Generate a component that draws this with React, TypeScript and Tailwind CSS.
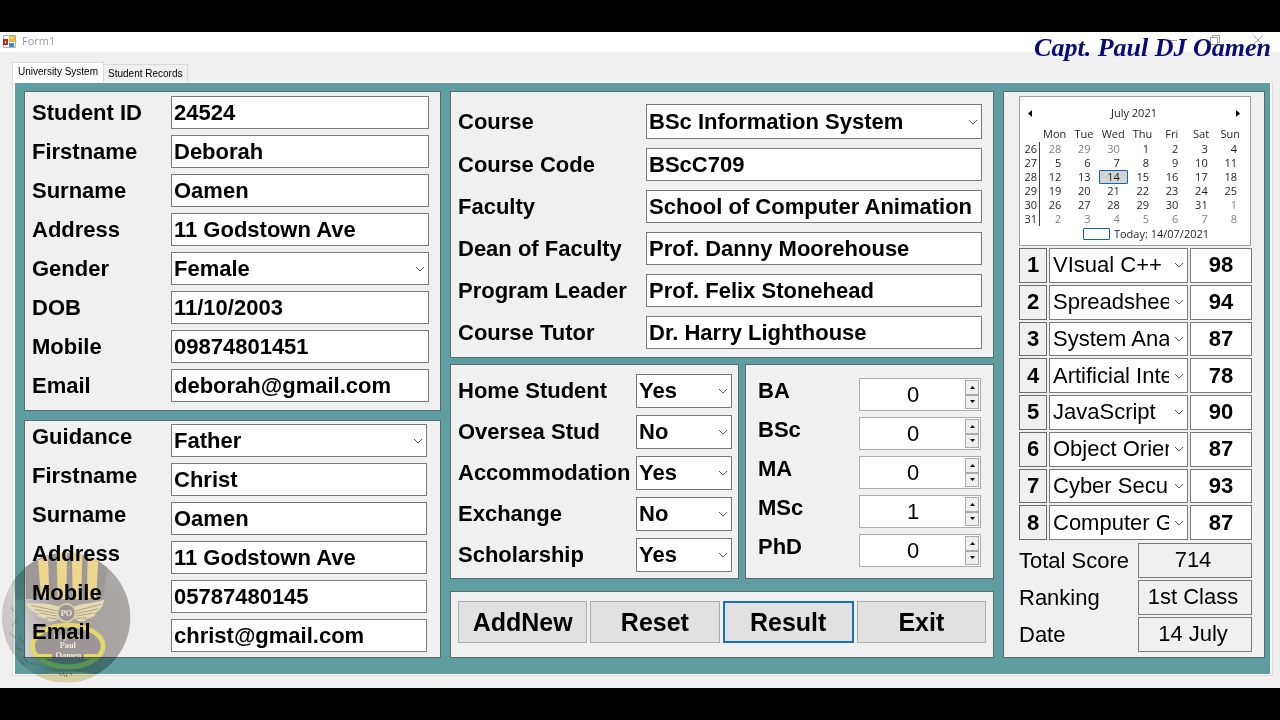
import React, { useId } from "react";

const panel = "border border-[#5c6b6c] bg-[#f0f0f0]";
const fieldBox =
  "block w-full min-w-0 rounded-none border border-[#7a7a7a] bg-white text-[22px] leading-7 font-bold text-black outline-none";

function Chevron() {
  return (
    <svg
      className="pointer-events-none absolute top-1/2 right-1 h-2 w-[10px] -translate-y-1/2"
      viewBox="0 0 10 8"
      fill="none"
      stroke="#5a5a5a"
      aria-hidden="true"
    >
      <path d="M1 2 L5 6 L9 2" />
    </svg>
  );
}

type FieldProps = {
  label: string;
  value: string;
  select?: boolean;
  columns: string;
  height?: string;
  labelClass?: string;
};

function Field({ label, value, select, columns, height = "h-[33px]", labelClass = "" }: FieldProps) {
  const id = useId();
  return (
    <div className={`grid items-center ${columns}`}>
      <label htmlFor={id} className={`text-[22px] leading-6 font-bold whitespace-nowrap ${labelClass}`}>
        {label}
      </label>
      {select ? (
        <div className="relative">
          <select id={id} defaultValue={value} className={`${fieldBox} ${height} appearance-none pr-4 pl-[2px]`}>
            <option>{value}</option>
          </select>
          <Chevron />
        </div>
      ) : (
        <input id={id} type="text" defaultValue={value} className={`${fieldBox} ${height} px-[2px]`} />
      )}
    </div>
  );
}

function Counter({ label, value }: { label: string; value: number }) {
  const id = useId();
  return (
    <div className="grid grid-cols-[1fr_122px] items-center">
      <label htmlFor={id} className="pb-2 text-[22px] leading-6 font-bold">
        {label}
      </label>
      <div className="flex h-[33px] border border-[#adadad] bg-white p-px">
        <input
          id={id}
          type="number"
          defaultValue={value}
          className="w-full min-w-0 flex-1 bg-white text-center text-[22px] leading-7 text-black outline-none [appearance:textfield] [&::-webkit-inner-spin-button]:appearance-none"
        />
        <div className="flex w-[14px] flex-col">
          <button type="button" aria-label={`${label} up`} className="flex flex-1 items-center justify-center border border-[#acacac] bg-[#efefef]">
            <svg viewBox="0 0 5 3" className="h-[3px] w-[5px]">
              <path d="M0 3 L2.5 0 L5 3Z" />
            </svg>
          </button>
          <button type="button" aria-label={`${label} down`} className="flex flex-1 items-center justify-center border border-[#acacac] bg-[#efefef]">
            <svg viewBox="0 0 5 3" className="h-[3px] w-[5px]">
              <path d="M0 0 L2.5 3 L5 0Z" />
            </svg>
          </button>
        </div>
      </div>
    </div>
  );
}

const days = ["Mon", "Tue", "Wed", "Thu", "Fri", "Sat", "Sun"];
const weeks = [
  { week: 26, dates: [28, 29, 30, 1, 2, 3, 4] },
  { week: 27, dates: [5, 6, 7, 8, 9, 10, 11] },
  { week: 28, dates: [12, 13, 14, 15, 16, 17, 18] },
  { week: 29, dates: [19, 20, 21, 22, 23, 24, 25] },
  { week: 30, dates: [26, 27, 28, 29, 30, 31, 1] },
  { week: 31, dates: [2, 3, 4, 5, 6, 7, 8] },
];

function Calendar() {
  return (
    <div className="mr-[13px] ml-[15px] flex h-[150px] flex-col border border-[#a0a0a0] bg-white pt-2 pr-[5px] pl-[3px] font-['Open_Sans','Noto_Sans',sans-serif] text-[11px] text-[#1e1e1e]">
      <div className="flex h-4 items-center justify-between px-[5px]">
        <button type="button" aria-label="Previous month">
          <svg viewBox="0 0 4 7" className="h-[7px] w-1">
            <path d="M4 0 L0 3.5 L4 7Z" />
          </svg>
        </button>
        <span>July 2021</span>
        <button type="button" aria-label="Next month">
          <svg viewBox="0 0 4 7" className="h-[7px] w-1">
            <path d="M0 0 L4 3.5 L0 7Z" />
          </svg>
        </button>
      </div>
      <table className="mt-[5px] w-full table-fixed border-separate border-spacing-0 leading-[14px]">
        <thead>
          <tr className="h-4">
            <th className="w-[17px] p-0" />
            {days.map((d) => (
              <th key={d} className="p-0 text-center font-normal">
                {d}
              </th>
            ))}
          </tr>
        </thead>
        <tbody>
          {weeks.map(({ week, dates }, r) => (
            <tr key={week} className="h-[14px]">
              <td className="border-r border-[#404040] p-0 pr-[2px] text-right">{week}</td>
              {dates.map((date, c) => {
                const outside = (r === 0 && date > 7) || (r >= 4 && date < 20);
                const selected = r === 2 && date === 14;
                return (
                  <td key={c} className={`p-0 text-right ${outside ? "text-[#808080]" : ""}`}>
                    <span
                      className={`block pr-2 ${
                        selected ? "rounded-[1px] bg-[#d4d4d4] outline outline-offset-[-1px] outline-[#1464b4]" : ""
                      }`}
                    >
                      {date}
                    </span>
                  </td>
                );
              })}
            </tr>
          ))}
        </tbody>
      </table>
      <div className="flex items-center justify-center gap-1 pl-6 leading-4">
        <span className="h-3 w-[27px] rounded-[1px] border border-[#1464b4]" />
        <span>Today: 14/07/2021</span>
      </div>
    </div>
  );
}

const modules = [
  ["VIsual C++", 98],
  ["Spreadsheet", 94],
  ["System Analysis", 87],
  ["Artificial Intelligence", 78],
  ["JavaScript", 90],
  ["Object Oriented", 87],
  ["Cyber Security", 93],
  ["Computer Graphics", 87],
] as const;

const totals = [
  ["Total Score", "714"],
  ["Ranking", "1st Class"],
  ["Date", "14 July"],
];

function Watermark() {
  return (
    <svg
      viewBox="8 98 388 392"
      className="pointer-events-none absolute bottom-[5px] left-[2px] h-[131px] w-[129px] mix-blend-multiply"
      aria-hidden="true"
    >
      <defs>
        <clipPath id="disc">
          <ellipse cx="201" cy="294" rx="193" ry="195" />
        </clipPath>
        <linearGradient id="shade" x1="0" x2="1" y1="0.6" y2="0.4">
          <stop offset="0" stopColor="#d2d2d2" />
          <stop offset="0.16" stopColor="#dedede" />
          <stop offset="0.34" stopColor="#bab8b6" />
          <stop offset="0.5" stopColor="#aeaaa8" />
          <stop offset="1" stopColor="#b8b4b2" />
        </linearGradient>
      </defs>
      <g clipPath="url(#disc)">
        <rect x="8" y="98" width="388" height="392" fill="url(#shade)" />
        <path d="M78 98 H330 L312 238 H80Z" fill="#a8a3a1" />
        <path d="M40 180 L76 150 V236 L50 244Z" fill="#b8b8b8" opacity="0.7" />
        <path
          d="M34 262 l10 14 M52 300 l-14 20 M30 340 l20 16 M60 350 l12 22 M48 384 l22 10 M70 410 l16 20 M92 430 l20 6 M60 420 l18 22"
          stroke="#a4a8a8"
          strokeWidth="5"
          opacity="0.55"
        />
        <g fill="#fbe596">
          <path d="M116 122 L146 108 L151 236 H126Z" />
          <path d="M172 100 H204 L201 238 H176Z" />
          <path d="M218 100 H250 L246 238 H221Z" />
          <path d="M266 106 L298 118 L291 236 H263Z" />
        </g>
        <path
          d="M80 252 C120 250 155 252 180 262 L176 300 C165 306 155 307 143 304 L148 298 C130 298 120 293 112 287 L120 285 C103 280 92 270 86 262 Z"
          fill="#f3e8c0"
        />
        <path
          d="M316 240 C290 252 250 250 224 262 L228 300 C240 306 250 307 261 304 L256 298 C273 298 284 291 291 285 L284 283 C300 276 311 264 316 240Z"
          fill="#f3e8c0"
        />
        <path
          d="M96 258 L174 274 M106 270 L174 282 M120 280 L174 290 M142 294 L174 298 M308 254 L230 274 M298 268 L230 282 M284 280 L230 290 M262 294 L230 298"
          stroke="#b9ae88"
          strokeWidth="3"
        />
        <circle cx="202" cy="280" r="27" fill="#a5a09c" stroke="#e9dfae" strokeWidth="5" />
        <ellipse cx="206" cy="380" rx="106" ry="63" fill="#a6a19f" stroke="#f3e572" strokeWidth="14" />
        <path d="M126 422 Q206 462 286 422" fill="none" stroke="#e6f08a" strokeWidth="13" />
        <path d="M106 404 H158 V418 H118Z M254 404 H306 L294 418 H254Z" fill="#f3e572" />
        <path d="M108 470 Q206 444 304 468 Q206 510 108 470Z" fill="#e6dcae" />
        <path d="M178 462 l10 6 m4 -8 l5 12 m7 -10 l-2 10 m12 -12 l4 8" stroke="#7d8070" strokeWidth="3" />
      </g>
      <g fill="#fffbe9" textAnchor="middle" className="font-['Liberation_Serif',serif] text-[25px] font-bold">
        <text x="202" y="289">PO</text>
        <text x="206" y="358" opacity="0.7">Captain</text>
        <text x="206" y="387">Paul</text>
        <text x="208" y="416">Oamen</text>
      </g>
    </svg>
  );
}

const leftCols = "grid-cols-[139px_1fr]";
const midCols = "grid-cols-[188px_1fr]";
const optCols = "grid-cols-[178px_1fr]";
const buttonBase = "h-[42px] flex-1 bg-[#e1e1e1] text-[25px] leading-8 font-bold text-black";

export default function App() {
  return (
    <div className="flex min-h-screen flex-col bg-black py-8 font-['Liberation_Sans',Arial,sans-serif] text-black">
      <main className="relative flex flex-1 flex-col bg-[#f0f0f0]">
        <header className="relative flex h-5 items-center bg-white pl-[3px]">
          <svg viewBox="0 0 13 13" className="mb-[2px] h-[13px] w-[13px]" aria-hidden="true">
            <path d="M.5 .5H12.5V12.5H.5Z" fill="#f3f3f3" stroke="#b0b0b0" />
            <path d="M6 1H12V7H6Z" fill="#e9b92c" />
            <path d="M7 2H11V4H7Z" fill="#f7dc74" />
            <path d="M0 4H5V10H0Z" fill="#b52c1d" />
            <path d="M2 6H3V8H2Z" fill="#fff" />
            <path d="M6 8H11V12H6Z" fill="#4a82d8" />
          </svg>
          <h1 className="mb-[2px] ml-[6px] font-['Open_Sans','Noto_Sans',sans-serif] text-[11px] text-[#9a9a9a]">Form1</h1>
          <div className="absolute top-0 right-[17px] flex h-4 items-center gap-[33px]">
            <button type="button" aria-label="Minimize">
              <svg viewBox="0 0 10 10" className="h-[10px] w-[10px]" fill="none" stroke="#a0a0a0">
                <path d="M0 5.5H10" />
              </svg>
            </button>
            <button type="button" aria-label="Restore">
              <svg viewBox="0 0 10 10" className="h-[10px] w-[10px]" fill="none" stroke="#a0a0a0">
                <path d="M.5 2.5H7.5V9.5H.5ZM2.5 2.5V.5H9.5V7.5H7.5" />
              </svg>
            </button>
            <button type="button" aria-label="Close">
              <svg viewBox="0 0 10 10" className="h-[10px] w-[10px]" fill="none" stroke="#a0a0a0">
                <path d="M.5 .5L9.5 9.5M9.5 .5L.5 9.5" />
              </svg>
            </button>
          </div>
          <p className="pointer-events-none absolute top-0 right-[9px] font-['Liberation_Serif',serif] text-[26px] leading-8 font-bold whitespace-nowrap text-[#0a0a78] italic">
            Capt. Paul DJ Oamen
          </p>
        </header>

        <nav role="tablist" className="mt-[10px] flex items-end pl-3 text-[10px] leading-3">
          <button type="button" role="tab" aria-selected="true" className="h-5 border border-b-0 border-[#d9d9d9] bg-white px-[5px] pb-[2px]">
            University System
          </button>
          <button type="button" role="tab" aria-selected="false" className="h-[18px] border border-b-0 border-l-0 border-[#d9d9d9] px-1">
            Student Records
          </button>
        </nav>

        <div className="mr-[7px] mb-3 ml-3 flex flex-1 flex-col border border-t-0 border-[#dcdcdc] bg-white px-[2px] pt-px pb-px">
          <div className="grid flex-1 grid-cols-[417fr_544fr_262fr] gap-[9px] bg-[#5f9ea0] pt-2 pr-[5px] pb-4 pl-[9px]">
            <div className="flex min-w-0 flex-col gap-[9px]">
              <section className={`${panel} flex flex-col gap-[6px] pt-1 pr-[11px] pb-2 pl-[7px]`}>
                <Field columns={leftCols} label="Student ID" value="24524" />
                <Field columns={leftCols} label="Firstname" value="Deborah" />
                <Field columns={leftCols} label="Surname" value="Oamen" />
                <Field columns={leftCols} label="Address" value="11 Godstown Ave" />
                <Field columns={leftCols} label="Gender" value="Female" select />
                <Field columns={leftCols} label="DOB" value="11/10/2003" />
                <Field columns={leftCols} label="Mobile" value="09874801451" />
                <Field columns={leftCols} label="Email" value="deborah@gmail.com" />
              </section>
              <section className={`${panel} flex flex-1 flex-col gap-[6px] pt-[3px] pr-[13px] pl-[7px]`}>
                <Field columns={leftCols} labelClass="pb-2" label="Guidance" value="Father" select />
                <Field columns={leftCols} labelClass="pb-2" label="Firstname" value="Christ" />
                <Field columns={leftCols} labelClass="pb-2" label="Surname" value="Oamen" />
                <Field columns={leftCols} labelClass="pb-2" label="Address" value="11 Godstown Ave" />
                <Field columns={leftCols} labelClass="pb-2" label="Mobile" value="05787480145" />
                <Field columns={leftCols} labelClass="pb-2" label="Email" value="christ@gmail.com" />
              </section>
            </div>

            <div className="flex min-w-0 flex-col">
              <section className={`${panel} flex flex-col gap-[9px] pt-3 pr-[11px] pb-2 pl-[7px]`}>
                <Field columns={midCols} label="Course" value="BSc Information System" select height="h-[35px]" />
                <Field columns={midCols} label="Course Code" value="BScC709" />
                <Field columns={midCols} label="Faculty" value="School of Computer Animation" />
                <Field columns={midCols} label="Dean of Faculty" value="Prof. Danny Moorehouse" />
                <Field columns={midCols} label="Program Leader" value="Prof. Felix Stonehead" />
                <Field columns={midCols} label="Course Tutor" value="Dr. Harry Lighthouse" />
              </section>
              <div className="mt-[6px] grid grid-cols-[289fr_249fr] gap-[6px]">
                <section className={`${panel} flex flex-col gap-[7px] pt-[9px] pr-[6px] pb-[6px] pl-[7px]`}>
                  <Field columns={optCols} label="Home Student" value="Yes" select height="h-[34px]" />
                  <Field columns={optCols} label="Oversea Stud" value="No" select height="h-[34px]" />
                  <Field columns={optCols} label="Accommodation" value="Yes" select height="h-[34px]" />
                  <Field columns={optCols} label="Exchange" value="No" select height="h-[34px]" />
                  <Field columns={optCols} label="Scholarship" value="Yes" select height="h-[34px]" />
                </section>
                <section className={`${panel} flex flex-col gap-[6px] pt-[13px] pr-3 pl-3`}>
                  <Counter label="BA" value={0} />
                  <Counter label="BSc" value={0} />
                  <Counter label="MA" value={0} />
                  <Counter label="MSc" value={1} />
                  <Counter label="PhD" value={0} />
                </section>
              </div>
              <section className={`${panel} mt-3 flex flex-1 gap-[3px] pt-[9px] pr-[7px] pl-[7px]`}>
                <button type="button" className={`${buttonBase} border border-[#adadad]`}>AddNew</button>
                <button type="button" className={`${buttonBase} border border-[#adadad]`}>Reset</button>
                <button type="button" className={`${buttonBase} border-2 border-[#1470b8]`}>Result</button>
                <button type="button" className={`${buttonBase} border border-[#adadad]`}>Exit</button>
              </section>
            </div>

            <section className={`${panel} flex min-w-0 flex-col pt-1 text-[22px] leading-7`}>
              <Calendar />
              <div className="mt-[2px] mr-3 ml-[15px] flex h-[292px] flex-col gap-[2px]">
                {modules.map(([name, score], i) => (
                  <div key={name} className="grid flex-1 grid-cols-[28px_1fr_62px] gap-[2px]">
                    <span className="flex items-center justify-center border border-[#6a6a6a] font-bold">{i + 1}</span>
                    <div className="relative min-w-0">
                      <select
                        aria-label={`Module ${i + 1}`}
                        defaultValue={name}
                        className="block h-full w-full appearance-none overflow-hidden rounded-none border border-[#7a7a7a] bg-white pr-[18px] pl-[3px] leading-7 outline-none"
                      >
                        <option>{name}</option>
                      </select>
                      <Chevron />
                    </div>
                    <input
                      type="text"
                      aria-label={`Score ${i + 1}`}
                      defaultValue={score}
                      className="h-full w-full min-w-0 border border-[#7a7a7a] bg-white text-center font-bold outline-none"
                    />
                  </div>
                ))}
              </div>
              <div className="mt-[3px] mr-3 ml-[15px] flex flex-col gap-[2px]">
                {totals.map(([label, value]) => (
                  <div key={label} className="grid grid-cols-[1fr_114px] items-center">
                    <span className="whitespace-nowrap">{label}</span>
                    <output aria-label={label} className="flex h-[35px] items-center justify-center border border-[#7a7a7a] pr-1 pb-px">
                      {value}
                    </output>
                  </div>
                ))}
              </div>
            </section>
          </div>
        </div>
        <Watermark />
      </main>
    </div>
  );
}
